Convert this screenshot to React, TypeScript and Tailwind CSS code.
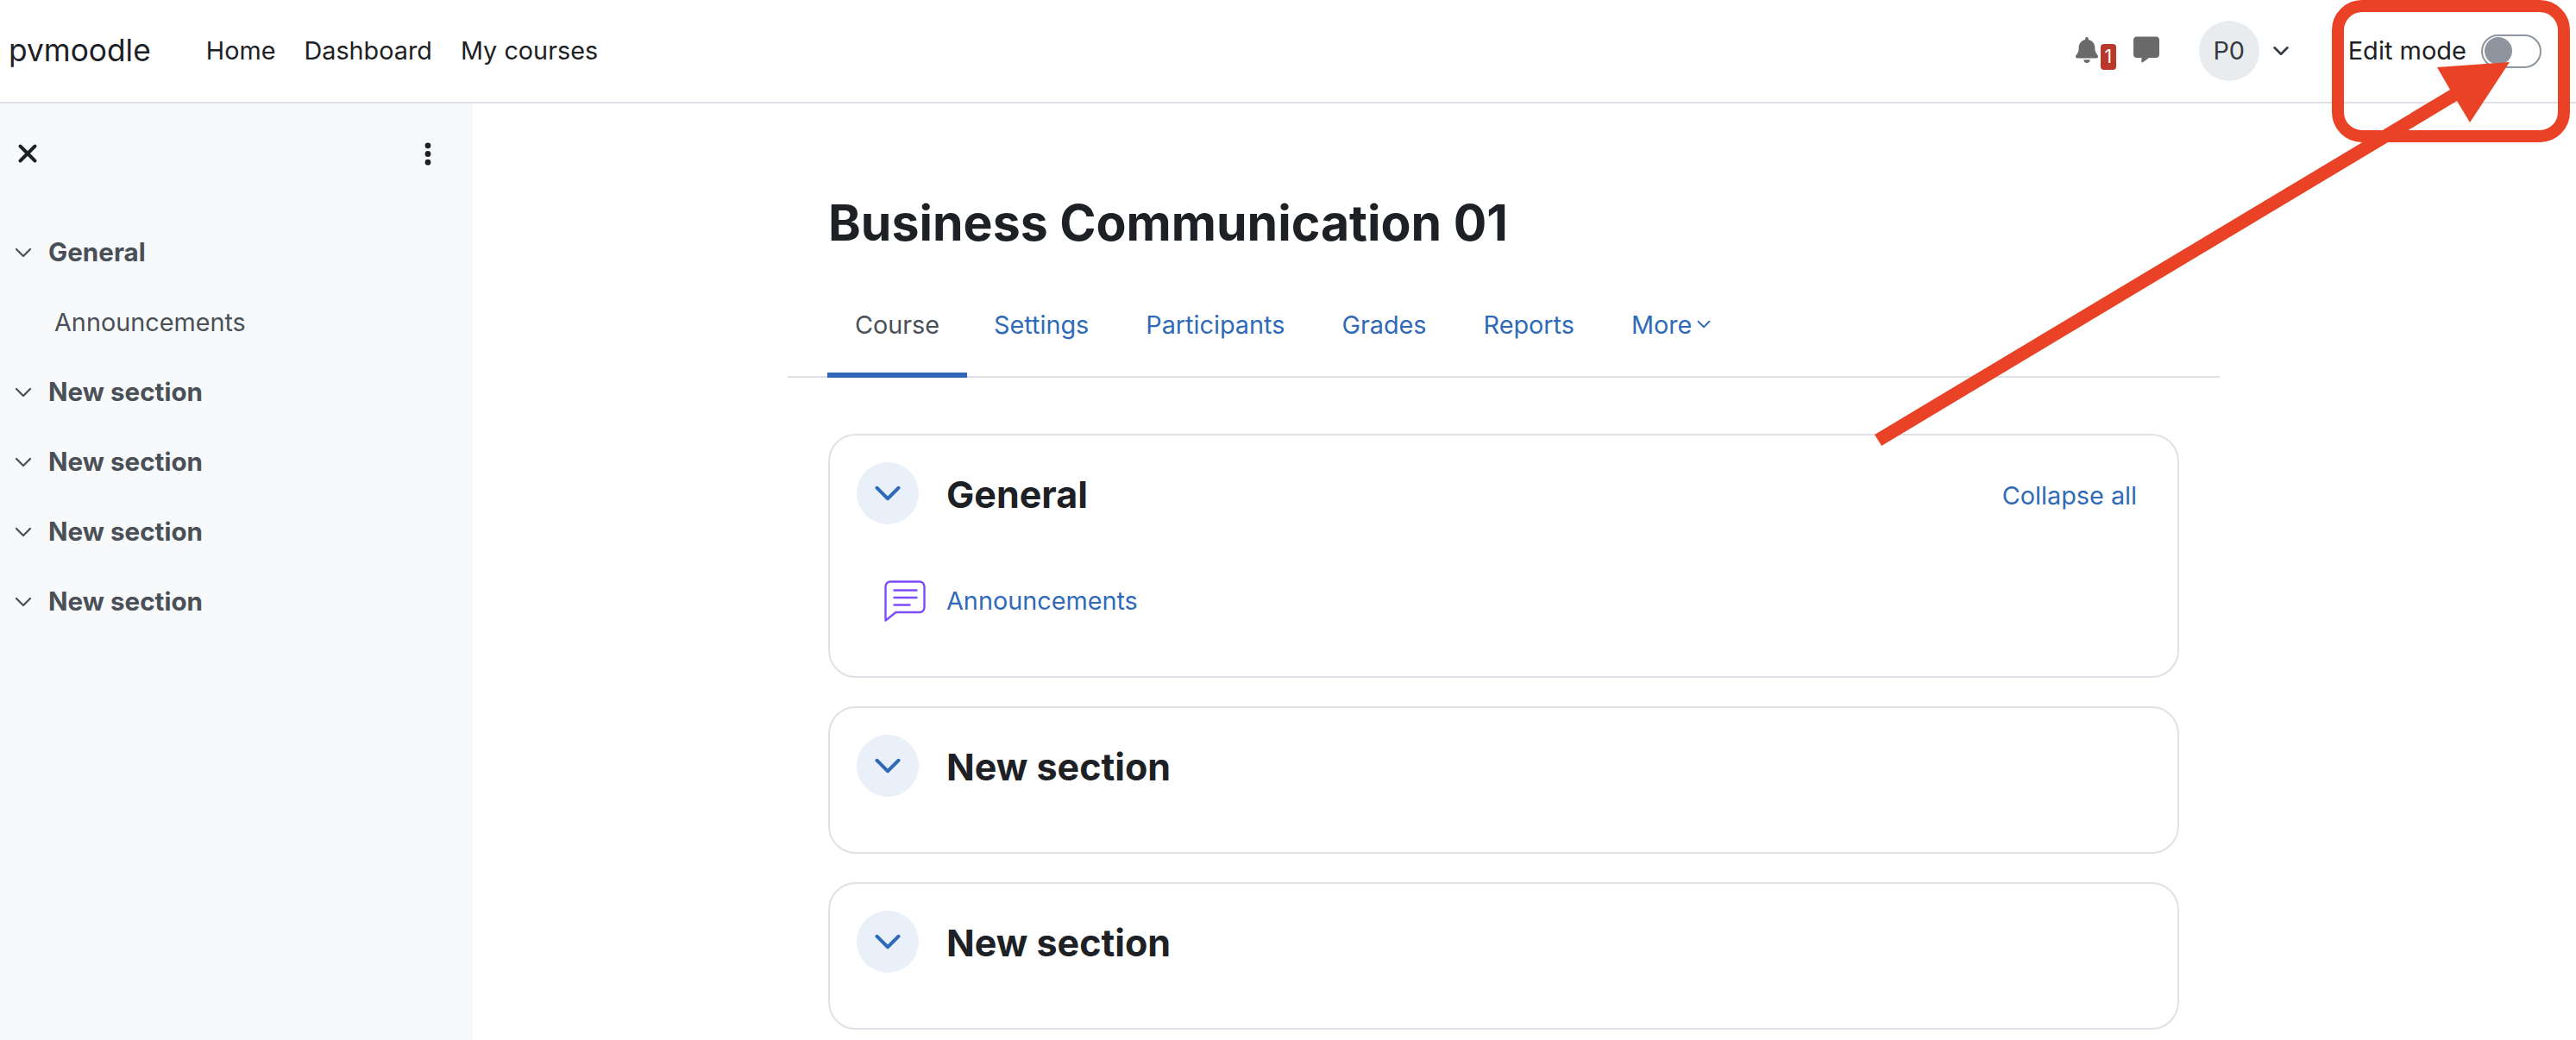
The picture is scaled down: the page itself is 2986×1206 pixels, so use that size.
import { ChevronDown, X } from 'lucide-react';
import { FaBell, FaEllipsisVertical, FaMessage } from 'react-icons/fa6';

const sidebarSections = ['New section', 'New section', 'New section', 'New section'];
const tabs = ['Settings', 'Participants', 'Grades', 'Reports'];

function SidebarHeading({ label }: { label: string }) {
  return (
    <div className="flex h-[81px] items-center pl-[11px]">
      <ChevronDown className="h-[32px] w-[32px] text-[#495057]" strokeWidth={1.7} />
      <span className="ml-[13px] text-[29.6px] font-bold text-[#495057]">{label}</span>
    </div>
  );
}

function CourseSection({ title, children, action }: { title: string; children?: React.ReactNode; action?: string }) {
  return (
    <section className="h-[171px] rounded-[32px] border-2 border-[#dee2e6] px-[31px] pt-[31px] has-[a]:h-[283px]">
      <div className="flex h-[72px] items-center">
        <div className="flex h-[72px] w-[72px] items-center justify-center rounded-full bg-[#e9f0f9]">
          <ChevronDown className="h-[50px] w-[50px] text-[#2f6ab8]" strokeWidth={1.9} />
        </div>
        <h3 className="mt-[2px] ml-[32px] text-[43px] font-bold text-[#1d2125]">{title}</h3>
        {action && <a className="mt-[6px] mr-[16px] ml-auto text-[28.8px] text-[#2f6ab8]">{action}</a>}
      </div>
      {children}
    </section>
  );
}

export default function App() {
  return (
    <div className="relative h-[1206px] w-[2986px] overflow-hidden bg-white font-['Inter',sans-serif] text-[#1d2125]">
      <header className="flex h-[120px] items-center border-b-2 border-[#dee2e6] pl-[10px]">
        <span className="text-[35.3px]">pvmoodle</span>
        <nav className="ml-[64px] flex gap-[33px] text-[28.8px]">
          <a>Home</a>
          <a>Dashboard</a>
          <a>My courses</a>
        </nav>
        <div className="ml-auto flex items-center">
          <div className="relative mr-[20px] h-[40px] w-[48px]">
            <FaBell className="mt-[4px] h-[30px] w-[28px] text-[#6a6a6a]" />
            <span className="absolute top-[12px] left-[30px] flex h-[30px] w-[18px] items-center justify-center rounded-[4px] bg-[#b9382a] text-[21px] text-white">1</span>
          </div>
          <FaMessage className="mb-[3px] h-[31px] w-[30px] text-[#6a6a6a]" />
          <div className="ml-[46px] flex h-[70px] w-[70px] items-center justify-center rounded-full bg-[#e9ecef] text-[28.8px] text-[#343a40]">P0</div>
          <ChevronDown className="ml-[10px] h-[30px] w-[30px] text-[#343a40]" strokeWidth={2} />
          <span className="ml-[63px] text-[29px]">Edit mode</span>
          <div className="mr-[40px] ml-[17px] flex h-[39px] w-[70px] items-center rounded-full border-2 border-[#8f959e] pl-[2px]">
            <div className="h-[32px] w-[32px] rounded-full bg-[#8f959e]" />
          </div>
        </div>
      </header>

      <div className="flex h-[1086px]">
        <aside className="w-[548px] shrink-0 bg-[#f8f9fa]">
          <div className="mb-[16px] flex h-[116px] items-center justify-between pr-[40px] pl-[15px]">
            <X className="h-[34px] w-[34px]" strokeWidth={2.8} />
            <FaEllipsisVertical className="h-[31px] w-[24px]" />
          </div>
          <SidebarHeading label="General" />
          <div className="flex h-[81px] items-center pl-[63px] text-[28.8px] text-[#495057]">Announcements</div>
          {sidebarSections.map((label, i) => (
            <SidebarHeading key={i} label={label} />
          ))}
        </aside>

        <main className="flex-1 pt-[101px] pl-[365px]">
          <div className="w-[1660px]">
            <h1 className="px-[47px] text-[57.2px] leading-[76px] font-bold">Business Communication 01</h1>
            <div className="mt-[19px] flex h-[122px] border-b-2 border-[#dee2e6] px-[46px] text-[28.8px]">
              <a className="mr-[-2px] flex h-[122px] w-[162px] items-center justify-center border-b-[6px] border-[#2f6ab8] pt-[6px] text-[#495057]">Course</a>
              {tabs.map((tab) => (
                <a key={tab} className="flex h-[122px] items-center border-b-[6px] border-transparent px-[33px] pt-[6px] text-[#2f6ab8]">{tab}</a>
              ))}
              <a className="flex h-[122px] items-center border-b-[6px] border-transparent px-[33px] pt-[6px] text-[#2f6ab8]">
                More
                <ChevronDown className="mb-[2px] ml-[1px] h-[26px] w-[26px]" strokeWidth={1.7} />
              </a>
            </div>
            <div className="mx-[47px] mt-[65px] flex flex-col gap-[33px]">
              <CourseSection title="General" action="Collapse all">
                <div className="mt-[64px] flex h-[50px] items-center pl-[32px]">
                  <svg viewBox="0 0 48 48" className="h-[48px] w-[48px] text-[#7c4dff]" fill="none" stroke="currentColor" strokeWidth="2.4" strokeLinecap="round" strokeLinejoin="round">
                    <path d="M1.5 46.5V7a5.5 5.5 0 0 1 5.5-5.5h34A5.5 5.5 0 0 1 46.5 7v24.5a5.5 5.5 0 0 1-5.5 5.5H13.5Z" />
                    <path d="M11.5 11.5h26M11.5 20h26M11.5 28.5h18" />
                  </svg>
                  <a className="ml-[24px] text-[28.8px] text-[#2f6ab8]">Announcements</a>
                </div>
              </CourseSection>
              <CourseSection title="New section" />
              <CourseSection title="New section" />
            </div>
          </div>
        </main>
      </div>

      {/* red annotation over the screenshot */}
      <svg className="absolute top-0 left-0 h-[1206px] w-[2986px]" viewBox="0 0 2986 1206" fill="none">
        <rect x="2710" y="7" width="262" height="151" rx="28" stroke="#ea4227" strokeWidth="14" />
        <path d="M2173 504 2840 104 2825 78 2909 72 2863 142 2848 117 2181 517Z" fill="#ea4227" />
      </svg>
    </div>
  );
}
